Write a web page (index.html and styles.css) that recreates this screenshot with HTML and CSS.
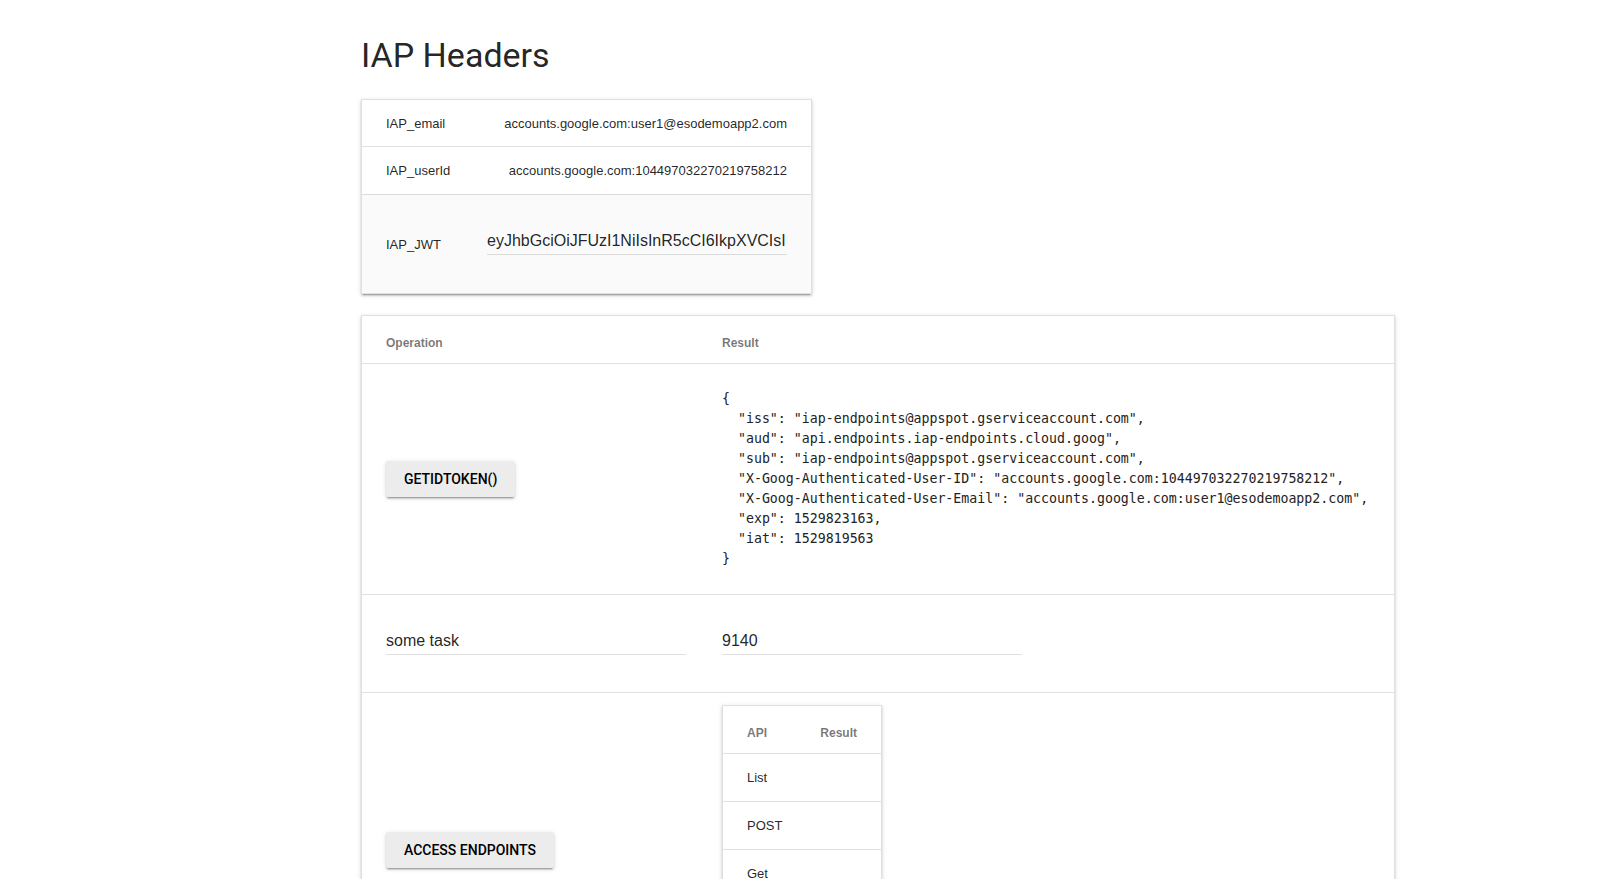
FILE: index.html
```html
<!DOCTYPE html>
<html lang="en">
<head>
<meta charset="utf-8">
<title>IAP Headers</title>
<link rel="stylesheet" href="styles.css">
</head>
<body>
<div class="page">
  <h3 class="title">IAP Headers</h3>

  <div class="card kv">
    <div class="kv-row r1">
      <span class="k">IAP_email</span>
      <span class="v">accounts.google.com:user1@esodemoapp2.com</span>
    </div>
    <div class="kv-row r2">
      <span class="k">IAP_userId</span>
      <span class="v">accounts.google.com:104497032270219758212</span>
    </div>
    <div class="kv-row r3">
      <span class="k">IAP_JWT</span>
      <div class="field jwt-field">eyJhbGciOiJFUzI1NiIsInR5cCI6IkpXVCIsI</div>
    </div>
  </div>

  <div class="card ops">
    <div class="ops-row head">
      <div class="c1 th">Operation</div>
      <div class="c2 th">Result</div>
    </div>
    <div class="ops-row row-token">
      <div class="c1"><button class="btn">GETIDTOKEN()</button></div>
      <div class="c2"><pre class="json">{
  "iss": "iap-endpoints@appspot.gserviceaccount.com",
  "aud": "api.endpoints.iap-endpoints.cloud.goog",
  "sub": "iap-endpoints@appspot.gserviceaccount.com",
  "X-Goog-Authenticated-User-ID": "accounts.google.com:104497032270219758212",
  "X-Goog-Authenticated-User-Email": "accounts.google.com:user1@esodemoapp2.com",
  "exp": 1529823163,
  "iat": 1529819563
}</pre></div>
    </div>
    <div class="ops-row row-task">
      <div class="c1"><div class="field task-field">some task</div></div>
      <div class="c2"><div class="field task-field">9140</div></div>
    </div>
    <div class="ops-row row-endpoints">
      <div class="c1"><button class="btn">ACCESS ENDPOINTS</button></div>
      <div class="c2 top">
        <div class="card mini">
          <div class="mini-row mini-head"><span>API</span><span>Result</span></div>
          <div class="mini-row"><span>List</span><span></span></div>
          <div class="mini-row"><span>POST</span><span></span></div>
          <div class="mini-row"><span>Get</span><span></span></div>
          <div class="mini-row"><span>PUT</span><span></span></div>
          <div class="mini-row"><span>Patch</span><span></span></div>
        </div>
      </div>
    </div>
  </div>
</div>
</body>
</html>
```

FILE: styles.css
```css
html, body {
  margin: 0;
  padding: 0;
  background: #ffffff;
}

body {
  font-family: "Liberation Sans", Arial, sans-serif;
  color: rgba(0, 0, 0, 0.87);
}

.page {
  padding: 11px 0 40px 361px;
}

.title {
  font-family: Roboto, "Liberation Sans", sans-serif;
  font-size: 34px;
  font-weight: 400;
  line-height: 40px;
  margin: 24px 0 24px 0;
  color: rgba(0, 0, 0, 0.87);
}

.card {
  box-sizing: border-box;
  background: #ffffff;
  border: 1px solid rgba(0, 0, 0, 0.12);
  box-shadow: 0 2px 2px 0 rgba(0, 0, 0, 0.14),
              0 3px 1px -2px rgba(0, 0, 0, 0.2),
              0 1px 5px 0 rgba(0, 0, 0, 0.12);
}

/* ---------- header key/value card ---------- */
.kv {
  width: 451px;
}

.kv-row {
  display: flex;
  align-items: center;
  justify-content: space-between;
  padding: 0 24px;
  font-size: 13px;
}

.kv-row + .kv-row {
  border-top: 1px solid rgba(0, 0, 0, 0.12);
}

.r1 { height: 46px; }
.r2 { height: 47px; }
.r3 {
  height: 98px;
  background: #fafafa;
}

.field {
  box-sizing: border-box;
  width: 300px;
  padding: 4px 0;
  font-size: 16px;
  line-height: 18px;
  white-space: nowrap;
  border-bottom: 1px solid rgba(0, 0, 0, 0.12);
  color: rgba(0, 0, 0, 0.87);
}

.jwt-field {
  margin-bottom: 6px;
}

/* ---------- operations card ---------- */
.ops {
  width: 1034px;
  margin-top: 21px;
}

.ops-row {
  display: grid;
  grid-template-columns: 342px 1fr;
  font-size: 13px;
}

.ops-row + .ops-row {
  border-top: 1px solid rgba(0, 0, 0, 0.12);
}

.c1 {
  display: flex;
  align-items: center;
  padding: 0 18px 0 24px;
}

.c2 {
  display: flex;
  align-items: center;
  padding: 0 24px 0 18px;
}

.c2.top {
  align-items: flex-start;
  padding-top: 12px;
  padding-bottom: 12px;
}

.head {
  height: 47px;
}

.th {
  align-items: flex-end;
  padding-bottom: 8px;
  font-size: 12px;
  font-weight: bold;
  line-height: 24px;
  color: rgba(0, 0, 0, 0.54);
}

.row-token {
  height: 230px;
}

.json {
  margin: 0;
  font-family: "DejaVu Sans Mono", "Liberation Mono", monospace;
  font-size: 13.25px;
  line-height: 20px;
  color: #222222;
}

.row-task {
  height: 97px;
}

.task-field {
  margin-bottom: 5px;
}

.btn {
  height: 36px;
  padding: 0 18px;
  border: none;
  border-radius: 2px;
  background: rgba(158, 158, 158, 0.2);
  color: #000000;
  font-family: Roboto, "Liberation Sans", sans-serif;
  font-size: 14px;
  font-weight: 500;
  line-height: 36px;
  letter-spacing: 0;
  white-space: nowrap;
  box-shadow: 0 2px 2px 0 rgba(0, 0, 0, 0.14),
              0 3px 1px -2px rgba(0, 0, 0, 0.2),
              0 1px 5px 0 rgba(0, 0, 0, 0.12);
}

/* ---------- nested API table ---------- */
.mini {
  width: 160px;
}

.mini-row {
  display: flex;
  justify-content: space-between;
  align-items: center;
  height: 47px;
  padding: 0 24px;
  font-size: 13px;
}

.mini-row + .mini-row {
  border-top: 1px solid rgba(0, 0, 0, 0.12);
}

.mini-head {
  height: 47px;
  align-items: flex-end;
  box-sizing: border-box;
  padding-bottom: 8px;
  font-size: 12px;
  font-weight: bold;
  line-height: 24px;
  color: rgba(0, 0, 0, 0.54);
}
```
